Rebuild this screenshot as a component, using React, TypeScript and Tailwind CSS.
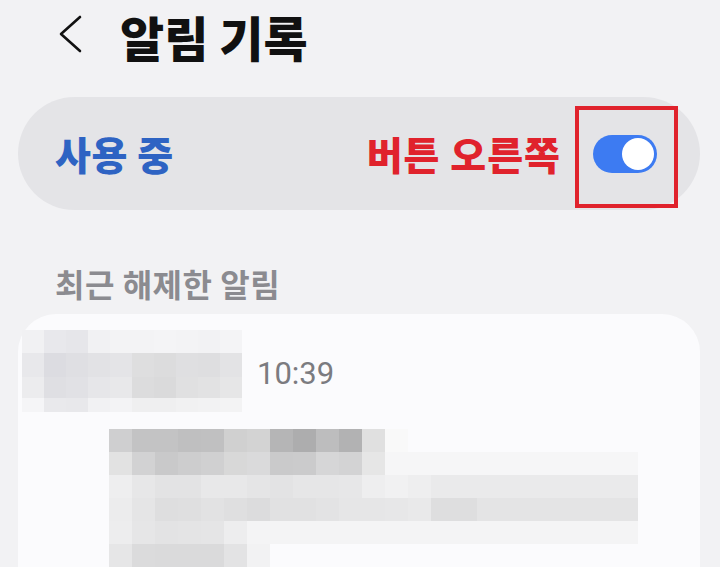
import React from 'react';

const font = { fontFamily: '"Noto Sans CJK KR", "Noto Sans", sans-serif' };

// blurred sender name (top-left)
const nameRows: { h: string; cells: string[] }[] = [
  {
    h: 'h-[23px]',
    cells: ['bg-[#f1f1f3]', 'bg-[#e8e8ec]', 'bg-[#e6e6ea]', 'bg-[#f1f1f3]', 'bg-[#f3f3f5]', 'bg-[#f3f3f5]', 'bg-[#f4f4f6]', 'bg-[#f3f3f5]', 'bg-[#f2f2f4]', 'bg-[#f4f4f6]'],
  },
  {
    h: 'h-[24px]',
    cells: ['bg-[#e8e8eb]', 'bg-[#dcdce1]', 'bg-[#dfdfe3]', 'bg-[#e2e2e5]', 'bg-[#e4e4e7]', 'bg-[#dededf]', 'bg-[#dcdcdd]', 'bg-[#dfdfe1]', 'bg-[#dedee0]', 'bg-[#e3e3e5]'],
  },
  {
    h: 'h-[21px]',
    cells: ['bg-[#ececee]', 'bg-[#dfdfe3]', 'bg-[#e1e1e5]', 'bg-[#e6e6e9]', 'bg-[#e8e8ea]', 'bg-[#dcdcdd]', 'bg-[#dadadb]', 'bg-[#e0e0e1]', 'bg-[#e2e2e3]', 'bg-[#e6e6e7]'],
  },
  {
    h: 'h-[14px]',
    cells: ['bg-[#f5f5f7]', 'bg-[#e9e9ec]', 'bg-[#e8e8eb]', 'bg-[#f1f1f3]', 'bg-[#f3f3f5]', 'bg-[#efeff0]', 'bg-[#efeff0]', 'bg-[#f1f1f2]', 'bg-[#f2f2f3]', 'bg-[#f3f3f4]'],
  },
];

const fill = (cells: string[], rest: string) => [...cells, ...Array(23 - cells.length).fill(rest)];

// blurred message body
const bodyRows: string[][] = [
  fill(['bg-[#cfcfd0]', 'bg-[#c3c3c4]', 'bg-[#c3c3c4]', 'bg-[#bfbfc0]', 'bg-[#c0c0c1]', 'bg-[#d0d0d0]', 'bg-[#d3d3d3]', 'bg-[#b5b5b6]', 'bg-[#adadae]', 'bg-[#bdbdbe]', 'bg-[#b2b2b3]', 'bg-[#e0e0e0]', 'bg-[#f9f9f9]'], 'bg-transparent'),
  fill(['bg-[#e2e2e2]', 'bg-[#d2d2d3]', 'bg-[#c9c9ca]', 'bg-[#cdcdce]', 'bg-[#d0d0d1]', 'bg-[#d8d8d8]', 'bg-[#dadadb]', 'bg-[#cacacb]', 'bg-[#cbcbcc]', 'bg-[#d6d6d7]', 'bg-[#d3d3d4]', 'bg-[#e6e6e6]'], 'bg-[#f6f6f7]'),
  fill(['bg-[#eeeeef]', 'bg-[#e7e7e8]', 'bg-[#e3e3e4]', 'bg-[#e3e3e4]', 'bg-[#e8e8e9]', 'bg-[#e8e8e9]', 'bg-[#e5e5e6]', 'bg-[#e3e3e4]', 'bg-[#e6e6e7]', 'bg-[#e6e6e7]', 'bg-[#e7e7e8]', 'bg-[#eeeeef]', 'bg-[#f1f1f2]', 'bg-[#eeeeef]'], 'bg-[#eaeaeb]'),
  fill(['bg-[#ececed]', 'bg-[#e5e5e6]', 'bg-[#dededf]', 'bg-[#dfdfe0]', 'bg-[#e2e2e3]', 'bg-[#dfdfe0]', 'bg-[#dcdcdd]', 'bg-[#e1e1e2]', 'bg-[#e1e1e2]', 'bg-[#e3e3e4]', 'bg-[#e6e6e7]', 'bg-[#e6e6e7]', 'bg-[#e7e7e8]', 'bg-[#e9e9ea]', 'bg-[#dededf]', 'bg-[#dededf]'], 'bg-[#e4e4e5]'),
  fill(['bg-[#ededee]', 'bg-[#e6e6e7]', 'bg-[#e3e3e4]', 'bg-[#e4e4e5]', 'bg-[#e5e5e6]', 'bg-[#ededee]'], 'bg-[#f4f4f5]'),
  fill(['bg-[#e6e6e7]', 'bg-[#dbdbdc]', 'bg-[#dadadb]', 'bg-[#dadadb]', 'bg-[#dadadb]', 'bg-[#e3e3e4]', 'bg-[#f2f2f3]'], 'bg-transparent'),
];

const App = () => {
  return (
    <div className="w-[720px] h-[567px] overflow-hidden bg-[#f2f2f4] flex flex-col" style={font}>
      {/* header */}
      <div className="h-[72px] flex flex-row items-center pl-[58px] shrink-0">
        <svg width="26" height="40" viewBox="0 0 26 40" className="mt-[-2px]">
          <polyline points="22,2 3,19 22,36" fill="none" stroke="#111" strokeWidth="2.6" strokeLinecap="round" strokeLinejoin="round" />
        </svg>
        <h1 className="ml-[36px] text-[48px] font-black leading-none text-[#111] tracking-[0px]">알림 기록</h1>
      </div>

      {/* master switch */}
      <div className="mt-[25px] ml-[18px] mr-[20px] h-[113px] shrink-0 rounded-full bg-[#e4e4e7] flex flex-row items-center pl-[37px] pr-[22px]">
        <span className="text-[39px] font-extrabold leading-none text-[#2e63c3] tracking-[0.5px]">사용 중</span>
        <span className="ml-auto text-[39px] font-extrabold leading-none text-[#e0222c] tracking-[1px]">버튼 오른쪽</span>
        <div className="ml-[14px] w-[103px] h-[102px] mt-[6px] border-[4px] border-[#e0222c] flex items-center pl-[14px] pb-[6px]">
          <div className="w-[64px] h-[38px] rounded-full bg-[#3d7bf2] flex justify-end items-center p-[3px]">
            <div className="w-[32px] h-[32px] rounded-full bg-white" />
          </div>
        </div>
      </div>

      {/* section label */}
      <div className="h-[104px] shrink-0 flex items-center pt-[41px] pl-[55px]">
        <span className="text-[32px] font-bold leading-none text-[#8b8b90] tracking-[0.5px]">최근 해제한 알림</span>
      </div>

      {/* list card */}
      <div className="flex-1 ml-[18px] mr-[20px] rounded-t-[38px] bg-[#fbfbfd] pt-[16px]">
        <div className="flex flex-row items-center pl-[4px]">
          <div className="flex flex-col">
            {nameRows.map((row, i) => (
              <div key={i} className="flex flex-row">
                {row.cells.map((c, j) => (
                  <div key={j} className={`w-[22px] ${row.h} ${c}`} />
                ))}
              </div>
            ))}
          </div>
          <span className="ml-[15px] text-[31px] leading-none text-[#7b7b80] mt-[4px]" style={{ fontFamily: 'Roboto, "Noto Sans", sans-serif' }}>
            10:39
          </span>
        </div>
        <div className="mt-[17px] pl-[91px] flex flex-col">
          {bodyRows.map((row, i) => (
            <div key={i} className="flex flex-row">
              {row.map((c, j) => (
                <div key={j} className={`w-[23px] h-[23px] ${c}`} />
              ))}
            </div>
          ))}
        </div>
      </div>
    </div>
  );
};

export default App;
